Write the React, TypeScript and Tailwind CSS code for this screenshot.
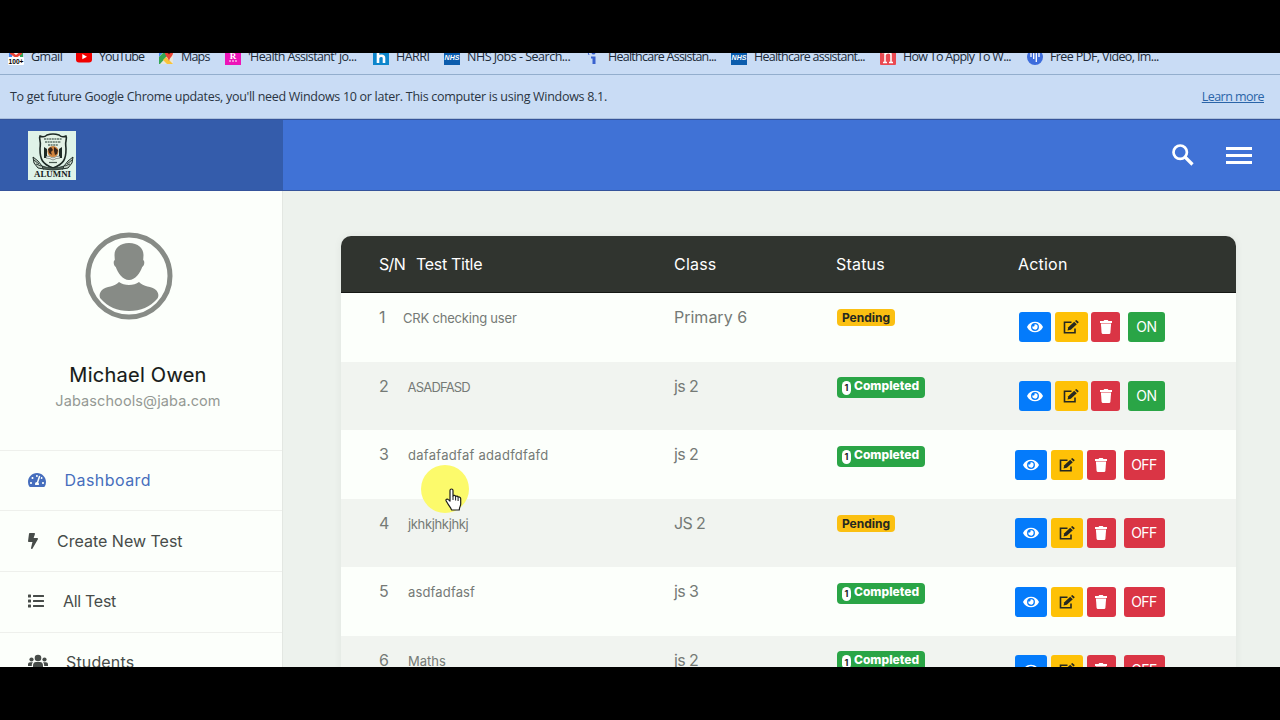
import { ReactNode } from "react"
import { IconType } from "react-icons"
import { FaBolt, FaEye, FaList, FaTachometerAlt } from "react-icons/fa"

const App: React.FC = () => {
    return <div className="flex flex-col w-screen h-screen bg-black py-[53px] overflow-hidden font-['Inter',sans-serif]">
        <div className="relative flex flex-col h-[614px] shrink-0 overflow-hidden bg-[#edf2ed]">
            <BookmarksBar />
            <UpdateNotice />
            <TopBar />
            <div className="flex grow items-start">
                <Sidebar />
                <TestTable />
            </div>
            {/* Pointer */}
            <div className="absolute left-[421px] top-[412px] w-12 h-12 rounded-full bg-[#fcfa6b]" />
            <HandCursor />
        </div>
    </div>
}

type BookmarkProps = {
    className: string
    label: string
    tracking?: string
    children: ReactNode
}

const Bookmark: React.FC<BookmarkProps> = ({ className, label, tracking = "tracking-[-0.5px]", children }) => {
    return (
        <div className={`flex items-center shrink-0 gap-[7px] ${className}`}>
            <svg viewBox="0 0 16 16" className="w-4 h-4 shrink-0">{children}</svg>
            <span className={`text-[12.5px] leading-4 whitespace-nowrap ${tracking}`}>{label}</span>
        </div>
    )
}

const NhsMark = () => <>
    <rect width="16" height="16" fill="#0b5cad" />
    <text x="8" y="10.5" textAnchor="middle" fontSize="7" fontWeight="bold" fontStyle="italic" fill="#fff" fontFamily="Liberation Sans">NHS</text>
</>

const BookmarksBar: React.FC = () => {
    return (
        <div className="flex h-[22px] shrink-0 items-start bg-[#c9dcf5] border-b border-[#93aecd] text-[#202a38] font-['Open_Sans',sans-serif]">
            <div className="flex -mt-1 pl-2">
                <Bookmark className="w-[68px]" label="Gmail">
                    <rect x="1" y="0" width="14" height="9" fill="#f3f5f7" />
                    <path d="M1 1h3v8H1z" fill="#4285f4" />
                    <path d="M12 1h3v8h-3z" fill="#34a853" />
                    <path d="M2 1l6 5 6-5v4L8 9 2 5z" fill="#ea4335" />
                    <rect y="8" width="16" height="8" rx="1" fill="#fff" />
                    <text x="8" y="15" textAnchor="middle" fontSize="8" fontWeight="bold" textLength="15" lengthAdjust="spacingAndGlyphs" fontFamily="Liberation Sans">100+</text>
                </Bookmark>
                <Bookmark className="w-[82px]" label="YouTube" tracking="tracking-[-0.9px]">
                    <rect y="2" width="16" height="11.5" rx="3" fill="#f00000" />
                    <path d="M6.3 5v5.3L11 7.7z" fill="#fff" />
                </Bookmark>
                <Bookmark className="w-[67px]" label="Maps" tracking="tracking-[-0.8px]">
                    <path d="M1 1h14v14H1z" fill="#e8e6dc" />
                    <path d="M1 1h6L1 8z" fill="#4285f4" />
                    <path d="M1 8l6-6 3 4-8 9H1z" fill="#34a853" />
                    <path d="M8 8l7 7H9L5 11z" fill="#f8c33a" />
                    <path d="M11 0a4 4 0 0 1 4 4c0 3-3 4-4 8-1-4-4-5-4-8a4 4 0 0 1 4-4z" fill="#ea4335" />
                    <circle cx="11" cy="4" r="1.3" fill="#7d1c16" />
                </Bookmark>
                <Bookmark className="w-[148px]" label="'Health Assistant' jo..." tracking="tracking-[-0.63px]">
                    <rect width="16" height="16" fill="#ed14b8" />
                    <text x="8" y="9.5" textAnchor="middle" fontSize="9" fontWeight="bold" fill="#fff" fontFamily="Liberation Serif">R</text>
                    <path d="M4 12h2M7 12h2M10 12h2" stroke="#fff" strokeWidth="1.2" />
                </Bookmark>
                <Bookmark className="w-[71px]" label="HARRI">
                    <rect width="16" height="16" fill="#0d86cc" />
                    <path d="M5 2v12M5 9c1-3 6-3 6 0v5" stroke="#fff" strokeWidth="2.6" fill="none" />
                </Bookmark>
                <Bookmark className="w-[141px]" label="NHS Jobs - Search...">
                    <NhsMark />
                </Bookmark>
                <Bookmark className="w-[146px]" label="Healthcare Assistan..." tracking="tracking-[-0.75px]">
                    <circle cx="8.5" cy="3.5" r="2" fill="#3a62cf" />
                    <path d="M6 7.5h4.5V15H7.5V9.5H6z" fill="#3a62cf" />
                    <path d="M2.5 2l1.5 4" stroke="#3a62cf" strokeWidth="1" />
                </Bookmark>
                <Bookmark className="w-[149px]" label="Healthcare assistant..." tracking="tracking-[-0.75px]">
                    <NhsMark />
                </Bookmark>
                <Bookmark className="w-[147px]" label="How To Apply To W..." tracking="tracking-[-0.72px]">
                    <rect width="16" height="16" rx="1" fill="#ea4a52" />
                    <path d="M2 3.5h4M8 3.5h4M5 3v10M11 5v8M3 13.5h4M9 13.5h4M5 6c1-3 6-3 6 0" stroke="#fff" strokeWidth="1.5" fill="none" />
                </Bookmark>
                <Bookmark className="" label="Free PDF, Video, Im..." tracking="tracking-[-0.63px]">
                    <circle cx="8" cy="8" r="8" fill="#3d6cdc" />
                    <path d="M4 3v5M6.7 3v7M9.3 3v10M12 3v5" stroke="#fff" strokeWidth="1.3" />
                </Bookmark>
            </div>
        </div>
    )
}

const UpdateNotice: React.FC = () => {
    return (
        <div className="flex h-11 shrink-0 items-center justify-between pt-0.5 pl-[10px] pr-4 bg-[#c9dcf5] border-b border-[#a9bfdd] text-[12.5px] text-[#2a3442] font-['Open_Sans',sans-serif]">
            <span className="tracking-[-0.29px]">
                To get future Google Chrome updates, you'll need Windows 10 or later. This computer is using Windows 8.1.
            </span>
            <a className="underline tracking-[-0.55px] text-[#2a64a8]">Learn more</a>
        </div>
    )
}

const TopBar: React.FC = () => {
    return (
        <div className="flex h-[72px] shrink-0 bg-[#4072d6] border-y border-[#35549b]">
            {/* Logo */}
            <div className="flex w-[283px] items-center pl-7 bg-[#345cab]">
                <Crest />
            </div>
            {/* Actions */}
            <div className="flex grow items-center justify-end pr-7 gap-8 text-white">
                <svg viewBox="0 0 22 22" className="w-[22px] h-[22px]" fill="none" stroke="currentColor">
                    <circle cx="8.2" cy="8.2" r="6.7" strokeWidth="2.700" />
                    <path d="M13 13l7.500 7.500" strokeWidth="3.200" />
                </svg>
                <div className="flex flex-col gap-1 w-[26px]">
                    <span className="h-[3px] bg-white" />
                    <span className="h-[3px] bg-white" />
                    <span className="h-[3px] bg-white" />
                </div>
            </div>
        </div>
    )
}

const Crest: React.FC = () => {
    return (
        <svg viewBox="0 0 48 49" className="w-12 h-[49px]">
            <rect width="48" height="49" fill="#dff3e8" />
            <path d="M12 5c2 1 5 1 7-1q6-2 12 0c2 2 5 2 7 1 1 2 0 3 0 5-1 3 0 5 0 8 0 10-2 15-13 19C14 33 12 28 12 18c0-3 1-5 0-8 0-2-1-3 0-5z" fill="#e3f2e6" stroke="#1e2b26" strokeWidth="1.6" />
            <path d="M16 8h18M17 11h16M20 14h10" stroke="#5f7369" strokeWidth="1.3" strokeDasharray="2 .6" />
            <path d="M16 16l3 2v9h-3zM34 16l-3 2v9h3z" fill="#1e2b26" />
            <path d="M18 25q4 0 7 2 3-2 7-2v2q-4 0-7 2-3-2-7-2z" fill="#f7faf5" stroke="#1e2b26" strokeWidth=".5" />
            <circle cx="25" cy="20.5" r="5.5" fill="#d0843f" />
            <path d="M20 18l3-2 2 3-2 2 1 3-3-2zM26 16l4 3-1 4-2 1-1-4z" fill="#39261b" />
            <path d="M21 31.5h8" stroke="#4a5b51" strokeWidth="1.2" />
            <path d="M5 26l5 4 4 5 2 3-6-1-4-5zM45 26l-5 4-4 5-2 3 6-1 4-5z" fill="#c7d6ca" stroke="#1e2b26" strokeWidth="1" />
            <path d="M6 29l5 4M44 29l-5 4M8 33l5 2M42 33l-5 2" stroke="#1e2b26" strokeWidth=".9" />
            <path d="M14 35q11 4 22 0l-1 3q-10 2-20 0z" fill="#53645a" stroke="#1e2b26" strokeWidth=".8" />
            <text x="24.5" y="46" textAnchor="middle" fontSize="7.5" fontWeight="bold" textLength="37" lengthAdjust="spacingAndGlyphs" fill="#17201c" fontFamily="Liberation Serif">ALUMNI</text>
        </svg>
    )
}

const Sidebar: React.FC = () => {
    return (
        <div className="flex flex-col w-[283px] h-[480px] shrink-0 bg-[#fcfffb] border-r border-[#e3e7e2]">
            {/* Profile */}
            <div className="flex flex-col h-[258.6px] shrink-0 pt-[41px] items-center pr-[6px]">
                <Avatar />
                <h2 className="mt-[41px] text-[20px] leading-7 text-[#161a18] tracking-[0.25px] [-webkit-text-stroke:0.15px_#161a18]">Michael Owen</h2>
                <p className="text-[14.5px] leading-6 tracking-[0.1px] text-[#949994]">Jabaschools@jaba.com</p>
            </div>
            <SidebarLink icon={FaTachometerAlt} iconClass="w-[18px] h-4" gap="gap-[18.5px]" label="Dashboard" tracking="tracking-[0.45px]" active />
            <SidebarLink icon={FaBolt} iconClass="w-[10px] h-4" gap="gap-[19px]" label="Create New Test" />
            <SidebarLink icon={FaList} iconClass="w-4 h-4" gap="gap-[19px]" label="All Test" tracking="tracking-[-0.3px]" />
            <SidebarLink icon={StudentsIcon} iconClass="w-5 h-4" gap="gap-[18px]" label="Students" tracking="tracking-[0.15px]" />
        </div>
    )
}

type SidebarLinkProps = {
    icon: IconType
    iconClass: string
    gap: string
    label: string
    tracking?: string
    active?: boolean
}

const SidebarLink: React.FC<SidebarLinkProps> = ({ icon: Icon, iconClass, gap, label, tracking = "tracking-normal", active }) => {
    return (
        <a className={`flex h-[60.8px] shrink-0 items-center pb-[1.5px] pl-7 border-t border-[#eef0ec] ${gap} ${active ? "text-[#466ebd]" : "text-[#474c49]"}`}>
            <Icon className={iconClass} />
            <span className={`text-[16px] ${tracking}`}>{label}</span>
        </a>
    )
}

const StudentsIcon: IconType = ({ className }) => {
    return (
        <svg viewBox="0 0 20 16" className={className} fill="currentColor">
            <circle cx="10" cy="4" r="3.3" />
            <circle cx="3.5" cy="5.5" r="2.1" />
            <circle cx="16.5" cy="5.5" r="2.1" />
            <path d="M5 15v-3.5c0-2.5 1.5-3.500 3-3.500h4c1.500 0 3 1 3 3.500V15z" />
            <path d="M0 12v-1.500c0-1.500 1-2.300 2-2.300h3c-1 1-1.200 2-1.200 3.800zM20 12v-1.500c0-1.500-1-2.300-2-2.300h-3c1 1 1.200 2 1.200 3.800z" />
        </svg>
    )
}

const Avatar: React.FC = () => {
    return (
        <svg viewBox="0 0 88 88" className="w-[88px] h-[88px] mr-[18px] shrink-0">
            <circle cx="44" cy="44" r="41" fill="none" stroke="#878b86" strokeWidth="5" />
            <path d="M44 11c9 0 14.5 5 14.5 12l-.3 5c2 1 1 6-1 7-2 6-7 13-13.2 13s-11.2-7-13.2-13c-2-1-3-6-1-7l-.3-5c0-7 5.5-12 14.5-12z" fill="#878b86" />
            <path d="M34 50c5 4 15 4 20 0 4 5 13 4 17 8 3 3 3 7 1 9-7 8-16 12-28 12s-21-4-28-12c-2-2-2-6 1-9 4-4 13-3 17-8z" fill="#878b86" />
        </svg>
    )
}

type Test = {
    title: string
    titleTracking: string
    numWidth: string
    className: string
    completed: boolean
    on: boolean
}

const tests: Test[] = [
    { title: "CRK checking user", titleTracking: "tracking-[-0.2px]", numWidth: "w-6", className: "Primary 6", completed: false, on: true },
    { title: "ASADFASD", titleTracking: "tracking-[-0.8px]", numWidth: "w-[28.5px]", className: "js 2", completed: true, on: true },
    { title: "dafafadfaf adadfdfafd", titleTracking: "tracking-[0.28px]", numWidth: "w-[29px]", className: "js 2", completed: true, on: false },
    { title: "jkhkjhkjhkj", titleTracking: "tracking-[-0.35px]", numWidth: "w-[29px]", className: "JS 2", completed: false, on: false },
    { title: "asdfadfasf", titleTracking: "tracking-[0.15px]", numWidth: "w-[29px]", className: "js 3", completed: true, on: false },
    { title: "Maths", titleTracking: "tracking-normal", numWidth: "w-[29px]", className: "js 2", completed: true, on: false },
]

const TestTable: React.FC = () => {
    return (
        <div className="w-[895px] ml-[58px] mt-[44.6px] shrink-0 rounded-t-[10px] overflow-hidden shadow-[0_0_8px_rgba(0,0,0,0.06)]">
            {/* Header */}
            <div className="flex h-[57.4px] items-center pl-[38px] bg-[#30342f] border-b border-[#151815] text-base text-white">
                <span className="w-[37px] tracking-[-0.7px]">S/N</span>
                <span className="w-[258px] tracking-[-0.3px]">Test Title</span>
                <span className="w-[162px] tracking-[0.2px]">Class</span>
                <span className="w-[182px] tracking-[0.2px]">Status</span>
                <span className="tracking-[0.2px]">Action</span>
            </div>
            {tests.map((test, i) => (
                <div key={i} className="flex h-[68.6px] items-start pl-[38px] pt-3 text-base text-[#757a76] odd:bg-[#f1f4f0] even:bg-[#fcfffb]">
                    <div className="flex w-[295px] items-baseline">
                        <span className={test.numWidth}>{i + 1}</span>
                        <span className={`text-[13px] ${test.titleTracking}`}>{test.title}</span>
                    </div>
                    <span className={i === 0 ? "w-[163px]" : "w-[163px] tracking-[-0.6px]"}>{test.className}</span>
                    <div className="w-[177px]">
                        {test.completed ? <CompletedBadge /> : <PendingBadge />}
                    </div>
                    <Actions on={test.on} />
                </div>
            ))}
        </div>
    )
}

const PendingBadge: React.FC = () => {
    return (
        <div className="mt-1 flex w-[58px] h-[17.5px] items-center justify-center rounded bg-[#fbc012] text-[12px] font-bold text-[#252821]">
            Pending
        </div>
    )
}

const CompletedBadge: React.FC = () => {
    return (
        <div className="mt-[3.5px] flex w-[87.5px] h-[21px] items-center rounded bg-[#2aa546] pl-[5px] gap-[3px] text-white">
            <span className="flex w-[9px] h-[14px] mt-px items-center justify-center rounded-full bg-white text-[9px] font-bold text-[#222]">1</span>
            <span className="-mt-[3px] text-[12px] font-extrabold">Completed</span>
        </div>
    )
}

const EditIcon: React.FC = () => {
    return (
        <svg viewBox="0 0 16 14" className="w-4 h-3.5" fill="none" stroke="currentColor">
            <path d="M8.5 2.2H1.5v10.5H12V8.5" strokeWidth="1.6" />
            <path d="M4.5 10.5l.8-3.3 5.9-5.4 2.6 2.5-6 5.4z" fill="currentColor" stroke="none" />
            <path d="M12 1.1l.9-.8q.5-.4 1 .1l1.5 1.4q.4.5 0 1l-.9.8z" fill="currentColor" stroke="none" />
        </svg>
    )
}

const TrashIcon: React.FC = () => {
    return (
        <svg viewBox="0 0 12 14" className="w-3 h-3.5" fill="currentColor">
            <path d="M0 1h3.5l.8-1h3.4l.8 1H12v1.9H0z" />
            <path d="M.9 3.4h10.2l-.7 9.4q-.1 1.2-1.3 1.2H2.9q-1.2 0-1.3-1.2z" />
        </svg>
    )
}

const Actions: React.FC<{ on: boolean }> = ({ on }) => {
    return (
        <div className={`flex mt-[7.5px] h-[30px] ${on ? "ml-[5px]" : "ml-[0.5px]"}`}>
            <button className="flex w-8 items-center justify-center rounded-[3px] bg-[#047bfb] text-white">
                <FaEye className="w-4 h-3.5" />
            </button>
            <button className="flex w-[32.5px] ml-1 items-center justify-center rounded-[3px] bg-[#fec107] text-[#252821]">
                <EditIcon />
            </button>
            <button className="flex w-[29px] ml-[3.5px] items-center justify-center rounded-[3px] bg-[#da3545] text-white">
                <TrashIcon />
            </button>
            <button className={`ml-2 rounded-[3px] text-sm text-white ${on ? "w-[37px] tracking-[-0.4px] bg-[#2aa546]" : "w-[41px] tracking-[-0.5px] bg-[#da3545]"}`}>
                {on ? "ON" : "OFF"}
            </button>
        </div>
    )
}

const HandCursor: React.FC = () => {
    return (
        <svg viewBox="0 0 18 24" className="absolute left-[445px] top-[434.5px] w-[18px] h-6">
            <path
                d="M5 2.5c0-2 3-2 3 0V8c.6-1 2.4-.8 2.6.5.8-.8 2.3-.5 2.5.7 1-.6 2.6 0 2.6 1.5V16c0 2-1.4 3-1.4 6H6.5C6 19.5 4 18 3 16L1.2 13c-.8-1.5 1-2.5 2.2-1.4L5 13z"
                fill="#fff"
                stroke="#1b1b1b"
                strokeWidth="1.2"
                strokeLinejoin="round"
            />
            <path d="M8 8v4M10.6 9v3.5M13.1 9.5v3.5" stroke="#1b1b1b" strokeWidth="1" />
        </svg>
    )
}

export default App
